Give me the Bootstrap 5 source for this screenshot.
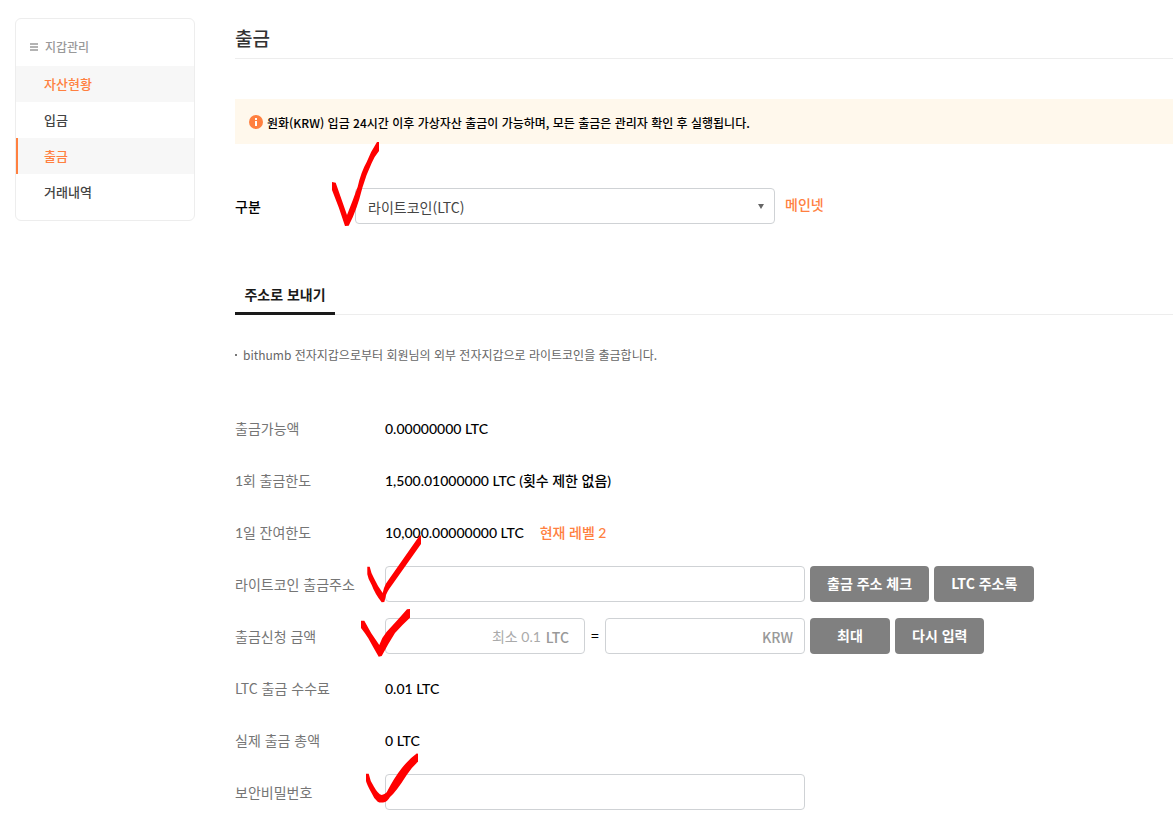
<!DOCTYPE html>
<html lang="ko">
<head>
<meta charset="utf-8">
<meta name="viewport" content="width=device-width, initial-scale=1">
<title>출금</title>
<link rel="stylesheet" href="https://cdn.jsdelivr.net/npm/bootstrap@5.3.0/dist/css/bootstrap.min.css">
<style>
  :root { --accent: #ff8040; --line: #ededed; }
  body { font-family: "Noto Sans CJK KR", sans-serif; font-size: 14px; line-height: 20px; font-weight: 400; color: #000; background: #fff; }
  .layout { padding: 18px 0 6px 15px; gap: 40px; }

  .side { width: 180px; border: 1px solid var(--line); border-radius: 6px; padding: 20px 0 10px; }
  .side-title { font-size: 12px; line-height: 15px; font-weight: 500; color: #999; padding: 0 14px 12px; gap: 7px; margin: 0; }
  .side-link { display: block; height: 36px; line-height: 36px; padding-left: 28px; font-size: 13px; font-weight: 500; color: #444; text-decoration: none; }
  .side-link.hot { background: #f7f7f7; color: var(--accent); }
  .side-link.current { border-left: 2px solid var(--accent); padding-left: 26px; }

  .main { min-width: 0; }
  .title { font-size: 19px; line-height: 40px; font-weight: 500; color: #333; border-bottom: 1px solid var(--line); margin: 0 0 40px; }
  .notice { background: #fff8ec; font-size: 12px; font-weight: 500; min-height: 45px; padding: 0 14px; gap: 4px; margin-bottom: 44px; }
  .notice p { padding-top: 2px; }

  .field-row { min-height: 36px; }
  .kind { margin-bottom: 60px; }
  .kind .field-name { width: 120px; color: #000; font-weight: 500; }
  .kind .accent { padding: 0 0 4px 10px; }
  .field-name { width: 150px; flex: none; color: #757575; }
  .field-wide { width: 420px; }
  .field-half { width: 200px; }
  .box, .box:focus { height: 36px; border: 1px solid #cfd2d5; border-radius: 4px; font-size: 14px; background-color: #fff; }
  .coin { padding: 2px 30px 0 12px; color: #444; background-image: none; }
  .caret { right: 11px; top: 16px; }
  .accent { color: var(--accent); font-weight: 500; }
  .value, .latin { font-family: Lato, "Noto Sans CJK KR", sans-serif; padding-top: 2px; }
  .value { font-weight: 500; color: #000; }

  .tabs { border-bottom: 1px solid var(--line); margin-bottom: 30px; height: 31px; }
  .tab, .tab:hover { width: 100px; height: 31px; font-weight: 700; line-height: 20px; text-align: center; white-space: nowrap; color: #1a1a1a; text-decoration: none; border-bottom: 3px solid #1a1a1a; }
  .tip { font-size: 12px; font-weight: 400; color: #666; margin: 0 0 45px; gap: 6px; }
  .tip::before { content: ""; width: 2px; height: 2px; background: #777; }

  .rows { gap: 16px; }
  .amount { padding: 2px 15px 0; gap: 5px; }
  .amount-krw { padding-right: 11px; }
  .amount input { min-width: 0; flex: 1; border: 0; padding: 0; text-align: right; outline: 0; background: none; font-family: Lato, "Noto Sans CJK KR", sans-serif; }
  .amount input::placeholder { color: #aaa; opacity: 1; }
  .unit { font-weight: 500; color: #999; }
  .equals { width: 20px; text-align: center; padding-bottom: 2px; }
  .act { height: 36px; border: 0; border-radius: 4px; background: #808080; color: #fff; font-size: 14px; font-weight: 700; line-height: 20px; padding: 0 17px 2px; margin-left: 5px; }
  .act-max { width: 80px; }

  .tick { position: absolute; z-index: 2; fill: #f00; pointer-events: none; }
  .tick-kind { left: -25px; top: -48px; }
  .tick-address { left: -19px; top: -32px; }
  .tick-amount { left: -25px; top: -10px; }
  .tick-password { left: -20px; top: -22px; }
</style>
</head>
<body>
<div class="layout d-flex align-items-start">
  <nav class="side flex-shrink-0" aria-label="지갑관리">
    <h2 class="side-title d-flex align-items-center">
      <svg width="8" height="8" fill="#b3b3b3" aria-hidden="true"><path d="M0 0h8v2H0zM0 3h8v2H0zM0 6h8v2H0z"/></svg>
      지갑관리
    </h2>
    <a class="side-link hot" href="#">자산현황</a>
    <a class="side-link" href="#">입금</a>
    <a class="side-link hot current" href="#" aria-current="page">출금</a>
    <a class="side-link" href="#">거래내역</a>
  </nav>

  <main class="main flex-grow-1">
    <h1 class="title">출금</h1>

    <div class="notice d-flex align-items-center">
      <svg class="flex-shrink-0" width="14" height="14" viewBox="0 0 14 14" aria-hidden="true"><circle cx="7" cy="7" r="7" fill="#ff8040"/><path d="M6 3h2v2H6zM6 6h2v5H6z" fill="#fff"/></svg>
      <p class="mb-0">원화(KRW) 입금 24시간 이후 가상자산 출금이 가능하며, 모든 출금은 관리자 확인 후 실행됩니다.</p>
    </div>

    <form>
      <div class="kind field-row d-flex align-items-center">
        <label class="field-name" for="coin">구분</label>
        <div class="field-wide position-relative">
          <select class="coin box form-select" id="coin"><option>라이트코인(LTC)</option></select>
          <svg class="caret position-absolute pe-none" width="6" height="5" fill="#666" aria-hidden="true"><path d="M0 0h6L3 5z"/></svg>
          <svg class="tick tick-kind" width="52" height="88" aria-hidden="true"><path d="M2 42 5.700 42.700 17 75 Q23 60 27.700 46.700 Q31 32 36.700 22 Q41 11 47 2L49 2V11Q44 17 41.700 23Q36 35 32.300 48Q27 70 18.700 85.700L15 86Q9 67 2 50Z"/></svg>
        </div>
        <span class="accent">메인넷</span>
      </div>

      <div class="tabs d-flex"><a class="tab" href="#" aria-current="true">주소로 보내기</a></div>
      <p class="tip d-flex align-items-center">bithumb 전자지갑으로부터 회원님의 외부 전자지갑으로 라이트코인을 출금합니다.</p>

      <div class="rows d-flex flex-column">
        <div class="field-row d-flex align-items-center">
          <span class="field-name">출금가능액</span><span class="value">0.00000000 LTC</span>
        </div>
        <div class="field-row d-flex align-items-center">
          <span class="field-name latin">1회 출금한도</span><span class="value">1,500.01000000 LTC (횟수 제한 없음)</span>
        </div>
        <div class="field-row d-flex align-items-center">
          <span class="field-name latin">1일 잔여한도</span><span class="value">10,000.00000000 LTC</span>
          <span class="accent latin ms-3">현재 레벨 2</span>
        </div>
        <div class="field-row d-flex align-items-center">
          <label class="field-name" for="address">라이트코인 출금주소</label>
          <div class="field-wide position-relative">
            <input class="box form-control" id="address" type="text">
            <svg class="tick tick-address" width="56" height="70" aria-hidden="true"><path d="M1.300 32.700H3.700Q5 39 8 44.300Q12 53 16.700 59Q18 53 20 49.500L54 1 55 2V10L26 51Q20 59 19.700 62.700L18.300 68 15.700 68.300Q9 60 5.700 51Q2 45 1.300 40.300Z"/></svg>
          </div>
          <button class="act" type="button">출금 주소 체크</button>
          <button class="act" type="button">LTC 주소록</button>
        </div>
        <div class="field-row d-flex align-items-center">
          <label class="field-name" for="amount">출금신청 금액</label>
          <div class="field-half position-relative">
            <div class="box amount d-flex align-items-center">
              <input id="amount" type="text" placeholder="최소 0.1"><span class="unit">LTC</span>
            </div>
            <svg class="tick tick-amount" width="51" height="50" aria-hidden="true"><path d="M1 12.700H4.300Q11 26 19.300 37Q22 29 26.700 23.700Q36 14 47 1.300L50 1V9.700Q42 17 35 25Q28 36 21.700 48L18.700 48.700Q13 39 8.300 30.300Q5 25 1 20Z"/></svg>
          </div>
          <span class="equals">=</span>
          <div class="field-half">
            <div class="box amount amount-krw d-flex align-items-center">
              <input id="krw" type="text" aria-label="KRW"><span class="unit">KRW</span>
            </div>
          </div>
          <button class="act act-max" type="button">최대</button>
          <button class="act" type="button">다시 입력</button>
        </div>
        <div class="field-row d-flex align-items-center">
          <span class="field-name">LTC 출금 수수료</span><span class="value">0.01 LTC</span>
        </div>
        <div class="field-row d-flex align-items-center">
          <span class="field-name">실제 출금 총액</span><span class="value">0 LTC</span>
        </div>
        <div class="field-row d-flex align-items-center">
          <label class="field-name" for="password">보안비밀번호</label>
          <div class="field-wide position-relative">
            <input class="box form-control" id="password" type="password">
            <svg class="tick tick-password" width="54" height="52" aria-hidden="true"><path d="M1 21.700H3.700Q5 29 9 34.700Q13 42 16.700 43Q19 43 21.700 40.300Q29 26 36.700 16.300Q44 7 52 1.300L53 2V9.700Q47 15 41.700 23Q31 40 25 45Q22 50 19.300 50.300Q15 51 12.700 49.700Q9 47 6.700 41.300Q2 33 1 29Z"/></svg>
          </div>
        </div>
      </div>
    </form>
  </main>
</div>
<script src="https://cdn.jsdelivr.net/npm/bootstrap@5.3.0/dist/js/bootstrap.bundle.min.js"></script>
</body>
</html>
